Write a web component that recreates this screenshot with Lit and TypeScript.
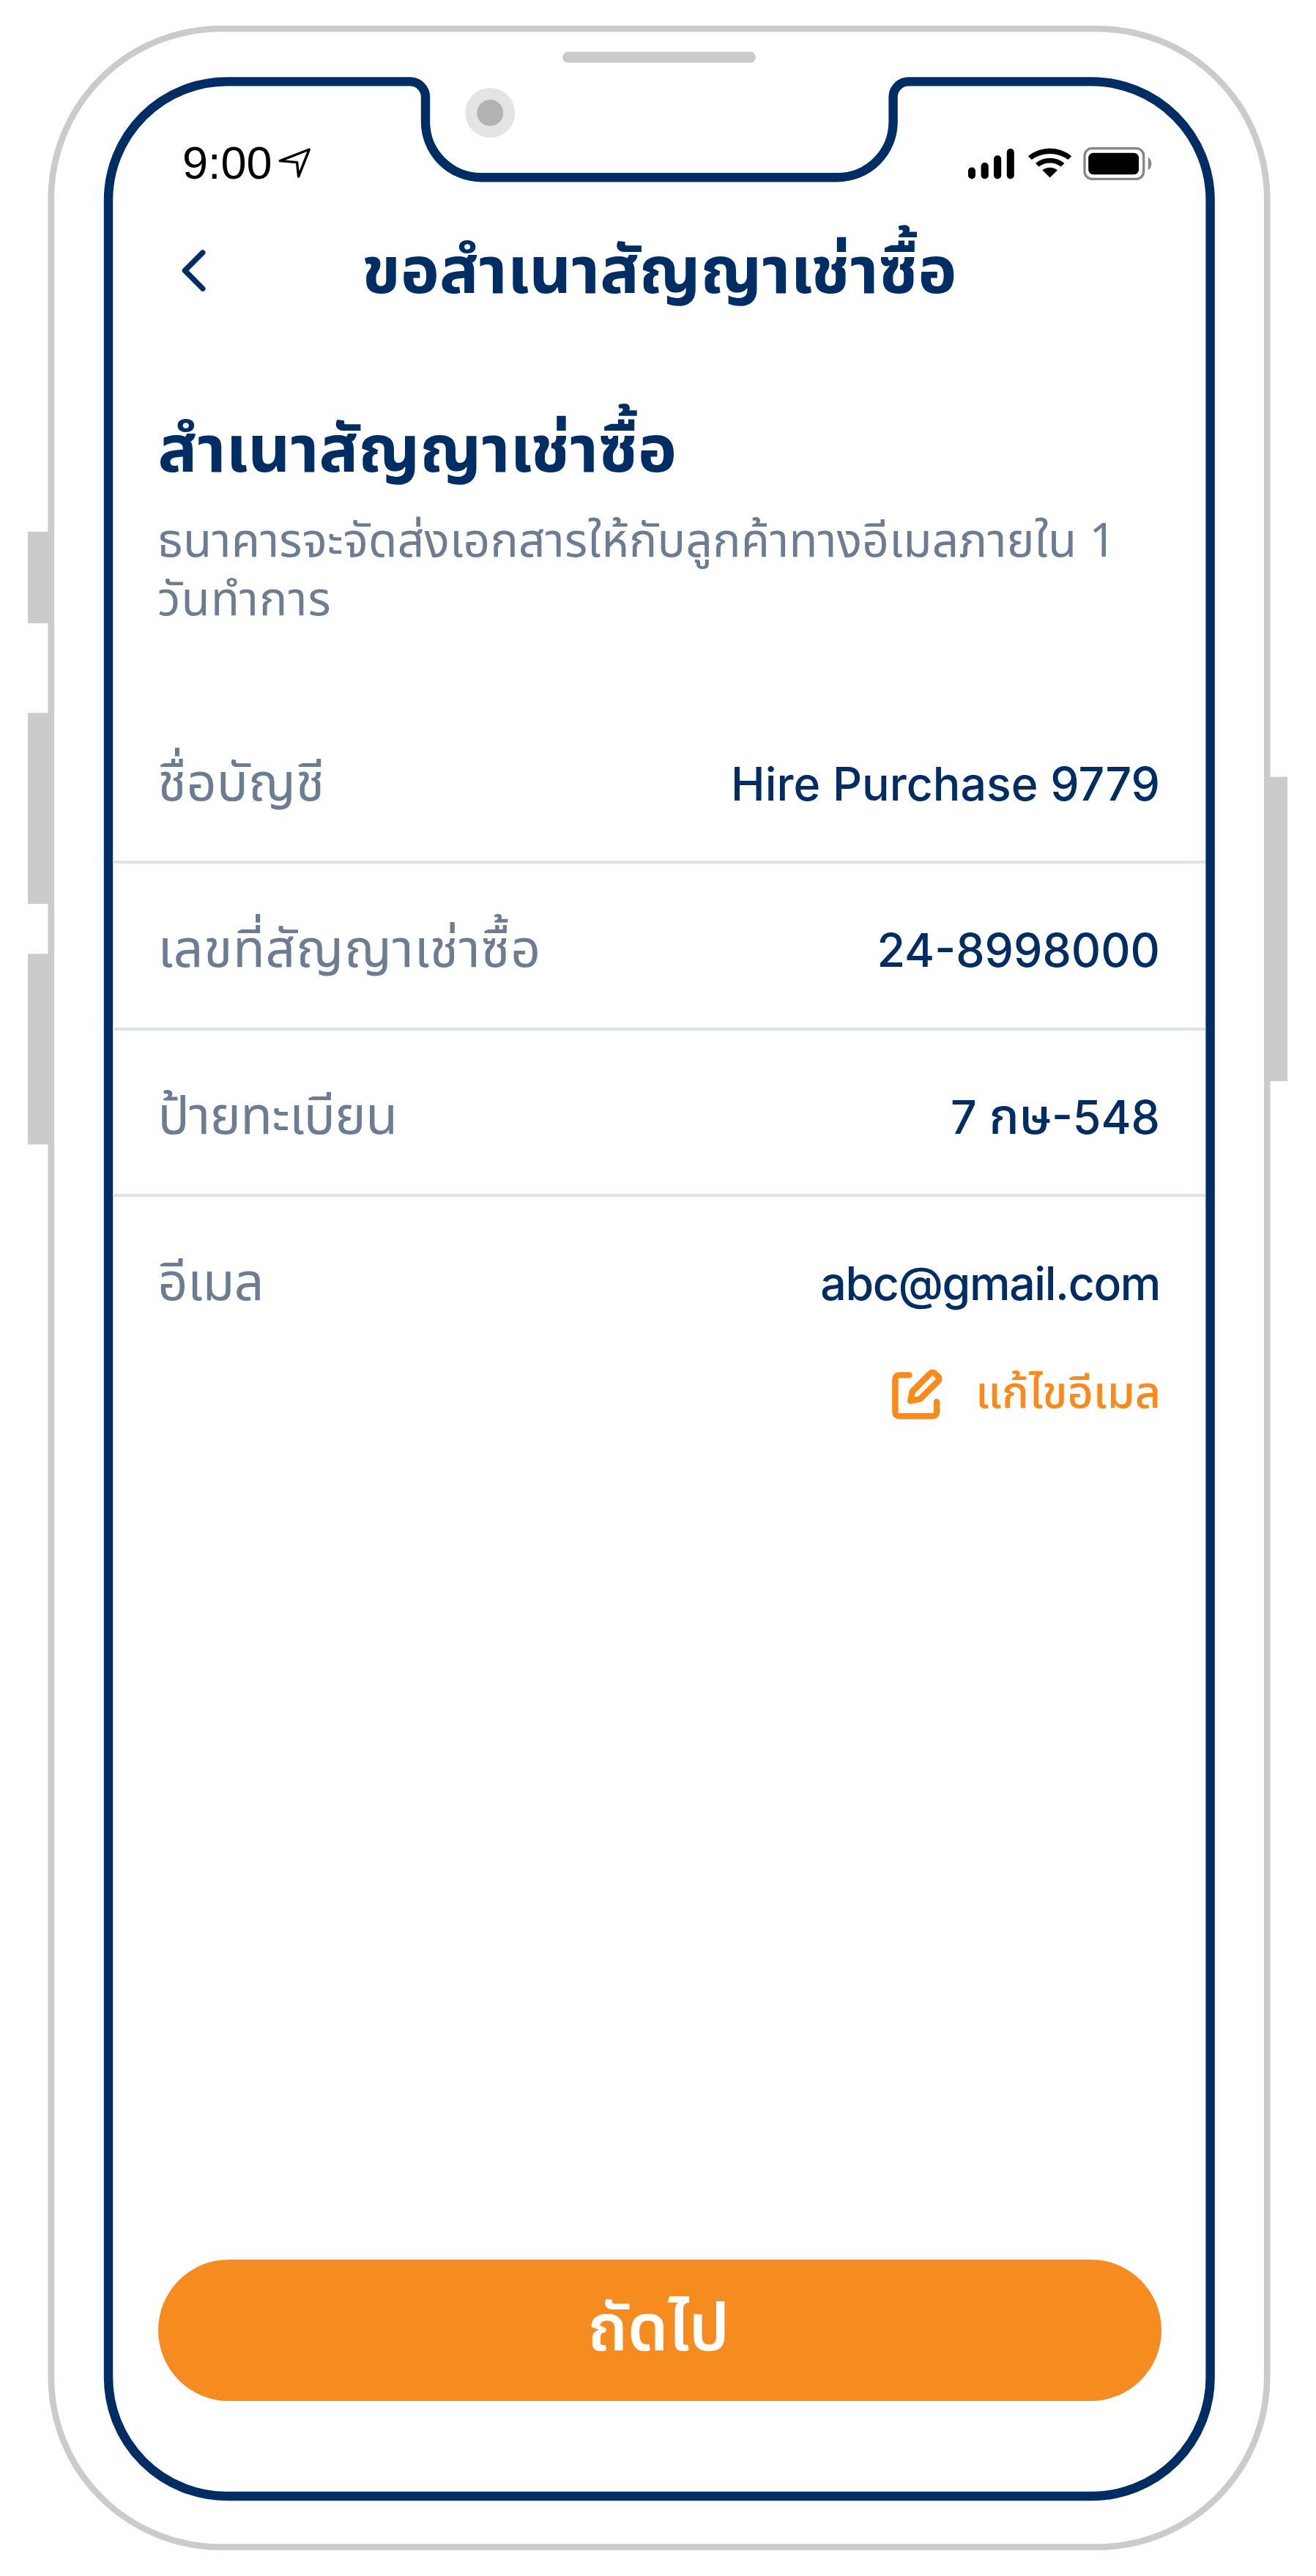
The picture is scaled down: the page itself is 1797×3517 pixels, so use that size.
import { LitElement, html, css } from "lit";
import { customElement, property } from "lit/decorators.js";

/** Outline of the handset: body, side keys, speaker, camera and the notched screen edge. */
@customElement("device-frame")
class DeviceFrame extends LitElement {
  static styles = css`
    :host {
      display: block;
    }
    .art {
      display: block;
    }
  `;

  render() {
    return html`
      <svg class="art" width="1797" height="3517" viewBox="0 0 1797 3517" fill="none">
        <g fill="#cbcbcb">
          <rect x="38" y="726" width="30" height="125" />
          <rect x="38" y="973.3" width="30" height="260.7" />
          <rect x="38" y="1302.3" width="30" height="260.2" />
          <rect x="1732" y="1060.7" width="26" height="415.3" />
          <rect x="768" y="70.8" width="264" height="15" rx="7.5" />
        </g>
        <rect x="69.8" y="39.3" width="1660.4" height="3438.2" rx="232" stroke="#cbcbcb" stroke-width="8.6" />
        <path
          d="M310 111.4 H560 A21 21 0 0 1 581 132.4 V166 A76 76 0 0 0 657 242.2 H1143.6 A76 76 0 0 0 1219.6 166 V132.4 A21 21 0 0 1 1240.6 111.4 H1490.6 A162 162 0 0 1 1652.6 273.4 V3246 A162 162 0 0 1 1490.6 3408 H310 A162 162 0 0 1 148 3246 V273.4 A162 162 0 0 1 310 111.4 Z"
          stroke="#002d63"
          stroke-width="12.4"
        />
        <circle cx="669.3" cy="154" r="34" fill="#e4e4e4" />
        <circle cx="669.3" cy="154" r="18" fill="#b3b3b3" />
      </svg>
    `;
  }
}

@customElement("status-bar")
class StatusBar extends LitElement {
  static styles = css`
    :host {
      display: flex;
      align-items: center;
      justify-content: space-between;
      box-sizing: border-box;
      height: 212px;
      padding: 0 71px 0 95.5px;
    }
    .left {
      display: flex;
      align-items: center;
      gap: 6px;
    }
    .time {
      font: 400 63px/70px "Liberation Sans", sans-serif;
      color: #000;
      margin-bottom: 2px;
    }
    svg {
      display: block;
    }
  `;

  render() {
    return html`
      <div class="left">
        <span class="time">9:00</span>
        <svg width="50" height="50" viewBox="378 198 50 50" fill="none">
          <path
            d="M422.3 204 L382.3 219.6 L405.6 221.6 L407.6 241 Z"
            stroke="#000"
            stroke-width="3.4"
            stroke-linejoin="round"
          />
        </svg>
      </div>
      <svg width="256" height="56" viewBox="1320 195 256 56">
        <rect x="1323" y="228.6" width="10" height="15.6" rx="4.6" />
        <rect x="1340.6" y="222" width="10.2" height="22.2" rx="4.8" />
        <rect x="1358" y="212.3" width="10.2" height="31.9" rx="4.8" />
        <rect x="1375.8" y="203" width="10" height="41.2" rx="4.8" />
        <path d="M1405 213.2 A46.5 46.5 0 0 1 1464.2 213.2 L1459.4 218 A42 42 0 0 0 1409.8 218 Z" />
        <path d="M1415 223 A30 30 0 0 1 1454.4 223 L1449.8 227.6 A25 25 0 0 0 1419.5 227.6 Z" />
        <path d="M1424.3 232.3 A17 17 0 0 1 1445 232.3 L1434.7 242.6 Z" />
        <rect x="1482" y="202.7" width="80.7" height="41.6" rx="10" fill="none" stroke="#878787" stroke-width="3.3" />
        <rect x="1487.2" y="208.8" width="68.8" height="29.4" rx="6.5" />
        <path d="M1568.8 214.6 Q1573.2 217.5 1573.2 223.5 Q1573.2 229.5 1568.8 232.2 Z" fill="#878787" />
      </svg>
    `;
  }
}

@customElement("detail-row")
class DetailRow extends LitElement {
  @property() label = "";

  static styles = css`
    :host {
      display: flex;
      align-items: baseline;
      justify-content: space-between;
      box-sizing: border-box;
      height: 227.5px;
      padding: 68px 62px 0 62px;
      border-bottom: 4px solid #dbe3eb;
    }
    :host([last]) {
      height: 168px;
      border-bottom: none;
    }
    .label {
      font: 450 71.5px/100px "Noto Sans Thai", "Noto Sans", sans-serif;
      color: #6c7c92;
    }
    .value {
      font: 500 62.6px/100px Inter, "Noto Sans Thai", sans-serif;
      color: #002d63;
    }
    :host([last]) .value {
      letter-spacing: -1.4px;
    }
    ::slotted(.thai) {
      font: 500 68px/1 "Noto Sans Thai", sans-serif;
    }
    :host([wide]) .label {
      letter-spacing: 0.8px;
    }
    :host([tight]) .label {
      letter-spacing: -0.6px;
    }
  `;

  render() {
    return html`<span class="label">${this.label}</span><span class="value"><slot></slot></span>`;
  }
}

@customElement("app-root")
class AppRoot extends LitElement {
  static styles = css`
    :host {
      display: block;
      width: 1797px;
      height: 3517px;
      overflow: hidden;
      position: relative;
      background: #fff;
      color: #002d63;
      font-family: "Noto Sans Thai", "Noto Sans", sans-serif;
    }
    .frame {
      position: absolute;
      inset: 0;
    }
    .screen {
      position: relative;
      display: flex;
      flex-direction: column;
      box-sizing: border-box;
      width: 1492.5px;
      height: 3402px;
      margin-left: 153.5px;
      padding: 117px 0 124.3px;
    }
    .nav {
      display: grid;
      grid-template-columns: 120px 1fr 120px;
      align-items: center;
      height: 88px;
      padding: 0 61px 0 62px;
    }
    .back {
      display: block;
      margin: -8px 0 0 29.5px;
    }
    .nav-title {
      margin: 0;
      text-align: center;
      font-weight: 700;
      font-size: 89.4px;
      line-height: 88px;
      white-space: nowrap;
    }
    .heading {
      margin: 145px 62px 0;
      font-weight: 700;
      font-size: 89.7px;
      line-height: 110px;
      white-space: nowrap;
    }
    .note {
      display: flex;
      flex-direction: column;
      margin: 28.5px 62px 91.2px 61.5px;
      font-size: 64px;
      line-height: 80px;
      letter-spacing: 0.2px;
      color: #6c7c92;
      white-space: nowrap;
    }
    .note-end {
      letter-spacing: 1.1px;
    }
    .edit {
      display: flex;
      align-items: center;
      justify-content: flex-end;
      gap: 42px;
      height: 80px;
      margin-top: 61px;
      padding-right: 61px;
      font-weight: 500;
      font-size: 61px;
      line-height: 80px;
      color: #f98a1b;
    }
    .next {
      display: flex;
      align-items: center;
      justify-content: center;
      height: 192.4px;
      margin: auto 59.8px 0 62.8px;
      border-radius: 97px;
      background: #f68c1f;
      color: #fff;
      font-weight: 600;
      font-size: 88.4px;
      line-height: 110px;
    }
    .next-label {
      margin-right: 4px;
    }
  `;

  render() {
    return html`
      <device-frame class="frame"></device-frame>
      <main class="screen">
        <status-bar></status-bar>
        <header class="nav">
          <svg class="back" width="40" height="64" viewBox="245 336 40 64" fill="none">
            <path
              d="M276.8 343.8 L252.4 368.4 L276.8 393"
              stroke="#002d63"
              stroke-width="7.4"
              stroke-linecap="round"
              stroke-linejoin="round"
            />
          </svg>
          <h1 class="nav-title">ขอสำเนาสัญญาเช่าซื้อ</h1>
        </header>
        <div class="heading">สำเนาสัญญาเช่าซื้อ</div>
        <div class="note">
          <span>ธนาคารจะจัดส่งเอกสารให้กับลูกค้าทางอีเมลภายใน 1</span>
          <span class="note-end">วันทำการ</span>
        </div>
        <detail-row label="ชื่อบัญชี">Hire Purchase 9779</detail-row>
        <detail-row label="เลขที่สัญญาเช่าซื้อ" wide>24-8998000</detail-row>
        <detail-row label="ป้ายทะเบียน" tight>7 <span class="thai">กษ</span>-548</detail-row>
        <detail-row label="อีเมล" tight last>abc@gmail.com</detail-row>
        <div class="edit">
          <svg width="74" height="74" viewBox="1220 1867 74 74" fill="none">
            <g stroke="#f98a1b" stroke-width="8.4" stroke-linecap="round" stroke-linejoin="round">
              <path d="M1245.6 1878.4 H1232.4 Q1226.4 1878.4 1226.4 1884.4 V1928.4 Q1226.4 1934.4 1232.4 1934.4 H1277 Q1283 1934.4 1283 1928.4 V1915" />
              <path d="M1247.2 1913.6 L1250 1900.5 L1273.6 1876.6 Q1277.4 1872.8 1281.2 1876.6 L1284.6 1880 Q1288 1883.6 1284.4 1887.2 L1260.4 1911 Z" />
            </g>
          </svg>
          <span>แก้ไขอีเมล</span>
        </div>
        <div class="next" role="button"><span class="next-label">ถัดไป</span></div>
      </main>
    `;
  }
}
